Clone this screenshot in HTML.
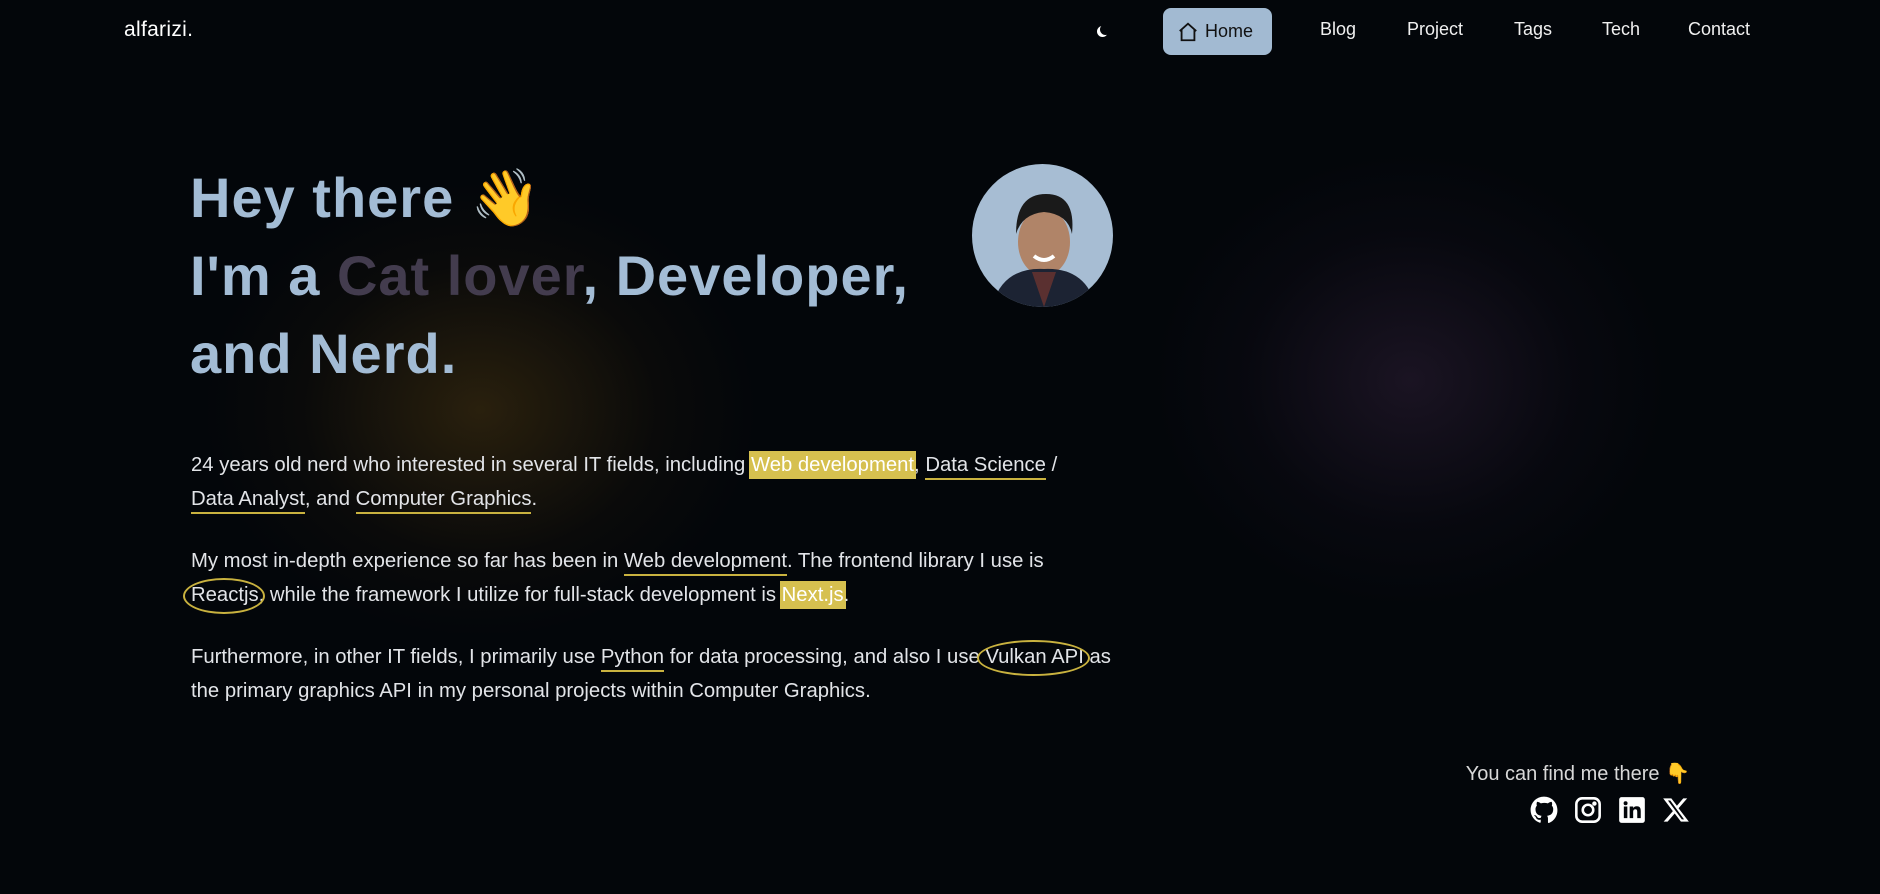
<!DOCTYPE html>
<html><head><meta charset="utf-8"><style>
*{margin:0;padding:0;box-sizing:border-box}
body{width:1880px;height:894px;background:#03060a;overflow:hidden;position:relative;font-family:"Liberation Sans",sans-serif;color:#e2e4e8}
.g1{position:absolute;left:200px;top:180px;width:560px;height:460px;background:radial-gradient(ellipse at center,rgba(120,85,20,.33),rgba(60,40,10,.12) 45%,rgba(0,0,0,0) 70%)}
.g2{position:absolute;left:1150px;top:150px;width:520px;height:460px;background:radial-gradient(ellipse at center,rgba(70,45,80,.35),rgba(40,25,50,.12) 45%,rgba(0,0,0,0) 70%)}
.logo{position:absolute;left:124px;top:18px;font-size:21px;color:#fff;letter-spacing:.3px}
.nav a{position:absolute;top:19px;font-size:18px;color:#f0f0f0;text-decoration:none}
.home{position:absolute;left:1163px;top:8px;width:109px;height:47px;background:#a2bad2;border-radius:8px;color:#111;font-size:18px;display:flex;align-items:center;padding-left:14px;gap:6px}
h1{position:absolute;left:190px;top:155px;font-size:56px;line-height:78px;color:#a3bcd5;font-weight:bold;letter-spacing:1px}
h1 .c{color:#433c4e}
.av{position:absolute;left:972px;top:164px;width:141px;height:143px;border-radius:50%;background:#a7bdd3;overflow:hidden}
p{position:absolute;left:191px;font-size:20.3px;line-height:34px;white-space:nowrap;color:#e2e4e8}
.hl{background:#d6c04f;color:#fff;padding:3px 2px;margin:0 -2px}
.ul{border-bottom:2px solid #c9b23f;padding-bottom:2px}
.ci{position:relative}
.ci::after{content:"";position:absolute;left:-8px;right:-6px;top:-6px;bottom:-8px;border:2px solid #c9b23f;border-radius:50%}
.find{position:absolute;right:190px;top:757px;font-size:20px;color:#d8d8d8}
.icons{position:absolute;left:1530px;top:796px;display:flex;gap:16px}
</style></head><body>
<div class="g1"></div><div class="g2"></div>
<div class="logo">alfarizi.</div>
<div style="position:absolute;left:1100px;top:24px;width:11px;height:11px;border-radius:50%;box-shadow:-3px 2px 0 0 #fff"></div>
<div class="home"><svg width="22" height="22" viewBox="0 0 24 24" fill="none" stroke="#111" stroke-width="2"><path d="M3 11L12 3l9 8M5 9v12h14V9"/></svg>Home</div>
<div class="nav"><a style="left:1320px">Blog</a><a style="left:1407px">Project</a><a style="left:1514px">Tags</a><a style="left:1602px">Tech</a><a style="left:1688px">Contact</a></div>
<h1>Hey there <span style="font-family:'Noto Sans CJK JP',sans-serif">👋</span><br>I'm a <span class="c">Cat lover</span>, Developer,<br>and Nerd.</h1>
<div class="av"><svg width="141" height="143"><ellipse cx="72" cy="78" rx="26" ry="34" fill="#b08468"/><path d="M44 70 q0-40 30-40 q30 0 26 40 q-4-20-28-22 q-22 2-28 22z" fill="#1a1a1a"/><path d="M20 143 q10-40 52-38 q42-2 52 38z" fill="#1c2333"/><path d="M60 108 l12 35 l12-35z" fill="#5a3030"/><path d="M62 92 q10 8 20 0" stroke="#fff" stroke-width="4" fill="none"/></svg></div>
<p style="top:448px">24 years old nerd who interested in several IT fields, including <span class="hl">Web development</span>, <span class="ul">Data Science</span> /<br><span class="ul">Data Analyst</span>, and <span class="ul">Computer Graphics</span>.</p>
<p style="top:544px">My most in-depth experience so far has been in <span class="ul">Web development</span>. The frontend library I use is<br><span class="ci">Reactjs</span>, while the framework I utilize for full-stack development is <span class="hl">Next.js</span>.</p>
<p style="top:640px">Furthermore, in other IT fields, I primarily use <span class="ul">Python</span> for data processing, and also I use <span class="ci">Vulkan API</span> as<br>the primary graphics API in my personal projects within Computer Graphics.</p>
<div class="find">You can find me there <span style="font-family:'Noto Sans CJK JP',sans-serif">👇</span></div>
<div class="icons">
<svg width="28" height="28" viewBox="0 0 24 24" fill="#fff"><path d="M12 .5C5.6.5.5 5.6.5 12c0 5.1 3.3 9.4 7.9 10.9.6.1.8-.2.8-.6v-2c-3.2.7-3.900-1.5-3.9-1.5-.5-1.3-1.3-1.7-1.3-1.700-1-.7.1-.7.1-.7 1.2.1 1.8 1.2 1.8 1.2 1 1.8 2.7 1.3 3.4 1 .1-.8.4-1.3.7-1.6-2.6-.3-5.3-1.300-5.3-5.7 0-1.3.5-2.3 1.2-3.1-.1-.3-.5-1.5.1-3.1 0 0 1-.3 3.3 1.2a11 11 0 0 1 6 0c2.3-1.5 3.3-1.2 3.3-1.2.7 1.6.2 2.8.1 3.1.8.8 1.2 1.8 1.2 3.1 0 4.4-2.7 5.4-5.3 5.700.4.4.8 1.1.8 2.2v3.3c0 .3.2.7.8.6A11.5 11.5 0 0 0 23.5 12C23.5 5.6 18.4.5 12 .5z"/></svg>
<svg width="28" height="28" viewBox="0 0 24 24" fill="none" stroke="#fff" stroke-width="2.2"><rect x="2" y="2" width="20" height="20" rx="5"/><circle cx="12" cy="12" r="4.5"/><circle cx="17.5" cy="6.5" r=".8" fill="#fff"/></svg>
<svg width="28" height="28" viewBox="0 0 24 24"><rect x="1" y="1" width="22" height="22" rx="2" fill="#fff"/><path d="M5 9h3v10H5zM6.5 4.5a1.7 1.7 0 1 1 0 3.4 1.7 1.7 0 0 1 0-3.4zM10 9h3v1.4c.5-.9 1.6-1.6 3.1-1.6 3 0 3.4 2 3.4 4.5V19h-3v-5c0-1.2 0-2.6-1.6-2.6S13 12.6 13 13.9V19h-3z" fill="#03060a"/></svg>
<svg width="28" height="28" viewBox="0 0 24 24" fill="#fff"><path d="M18.2 2h3.4l-7.4 8.5L23 22h-6.8l-5.3-7-6.1 7H1.4l7.9-9L1 2h7l4.8 6.4zm-1.2 18h1.9L7.1 3.9H5.1z"/></svg>
</div>
</body></html>
